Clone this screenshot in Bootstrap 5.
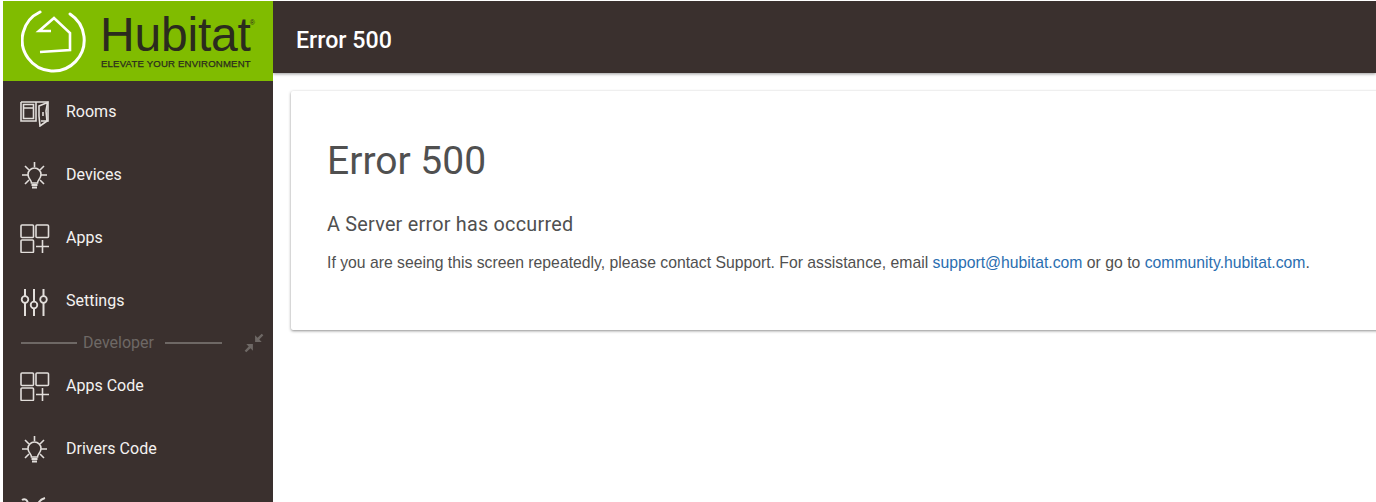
<!DOCTYPE html>
<html lang="en">
<head>
    <meta charset="UTF-8">
    <meta name="viewport" content="width=device-width, initial-scale=1.0">
    <title>Error 500</title>
    <link href="https://cdn.jsdelivr.net/npm/bootstrap@5.3.0/dist/css/bootstrap.min.css" rel="stylesheet">
    <style>
        html, body {
            height: 100%;
            overflow: hidden;
        }
        body {
            background: #fff;
            color: #505050;
            font-family: Roboto, "Liberation Sans", sans-serif;
        }
        .hub-shell {
            height: 100vh;
            padding-top: 1px;
        }
        .hub-side {
            width: 270px;
            margin-left: 3px;
            background: #3a302e;
            overflow: hidden;
        }
        .hub-logo {
            height: 80px;
            background: #80bc00;
            padding: 8px 0 0 18px;
            color: #2b2b1e;
        }
        .hub-logo-text {
            margin-left: 9px;
            padding-top: 4px;
        }
        .hub-word {
            font-family: "Liberation Sans", sans-serif;
            font-size: 48px;
            line-height: 44px;
            letter-spacing: -.2px;
            position: relative;
        }
        .hub-reg {
            font-size: 7px;
            line-height: 7px;
            letter-spacing: 0;
            position: absolute;
            top: 6px;
            right: -4px;
        }
        .hub-tag {
            font-family: "Liberation Sans", sans-serif;
            font-size: 9.6px;
            line-height: 10px;
            margin: 2px 0 0 1px;
            letter-spacing: .18px;
            white-space: nowrap;
            -webkit-text-stroke: .25px #2b2b1e;
        }
        .hub-menu {
            margin-top: -1px;
        }
        .hub-link {
            height: 63px;
            padding: 0 0 0 17px;
            color: #f4f2f1;
            font-size: 16px;
            gap: 16px;
        }
        .hub-link:hover, .hub-link:focus {
            color: #fff;
        }
        .hub-link svg {
            width: 30px;
            height: 30px;
            flex: none;
            fill: none;
            stroke: #e2dedb;
            stroke-width: 1.6;
        }
        .hub-divider {
            height: 22px;
            padding: 0 8px 0 18px;
            color: #6e6865;
            font-size: 16px;
        }
        .hub-divider i {
            height: 2px;
            background: #6e6865;
        }
        .hub-divider span {
            margin: 0 11px 0 6px;
        }
        .hub-top {
            height: 72px;
            background: #3a302e;
            color: #fff;
            padding: 6px 0 0 23px;
            font-size: 23.2px;
            font-weight: 500;
            box-shadow: 0 1px 3px rgba(0, 0, 0, .4);
        }
        .hub-panel {
            margin: 18px -10px 0 18px;
            height: 239px;
            padding: 47px 36px 0;
            border-radius: 2px;
            box-shadow: 0 1px 3px rgba(0, 0, 0, .45);
        }
        .hub-panel h1 {
            font-size: 39px;
            font-weight: 400;
            line-height: 46px;
            margin-bottom: 29px;
        }
        .hub-panel h5 {
            font-size: 19.8px;
            font-weight: 400;
            line-height: 24px;
            letter-spacing: .25px;
            margin-bottom: 15px;
        }
        .hub-panel p {
            font-family: "Liberation Sans", sans-serif;
            font-size: 15.75px;
            line-height: 22px;
            white-space: nowrap;
        }
        .hub-panel a {
            color: #2a6eb0;
            text-decoration: none;
        }
    </style>
</head>
<body>
    <div class="hub-shell d-flex">
        <!-- Sidebar -->
        <div class="hub-side flex-shrink-0">
            <div class="hub-logo d-flex">
                <svg width="70" height="66" viewBox="0 0 70 66" fill="none" stroke="#fff" class="flex-shrink-0">
                    <path d="M19 3A31 31 0 1 0 49 5" stroke-width="3" stroke-linecap="round"/>
                    <path d="M30 22H18L33 9 49 24V41L19 43" stroke-width="2.600"/>
                </svg>
                <div class="hub-logo-text">
                    <div class="hub-word">Hubitat<span class="hub-reg">®</span></div>
                    <div class="hub-tag">ELEVATE YOUR ENVIRONMENT</div>
                </div>
            </div>
            <nav class="nav flex-column flex-nowrap hub-menu">
                <a class="nav-link hub-link d-flex align-items-center" href="#">
                    <svg viewBox="0 0 30 30"><path d="M1 5H28V24H21M1 5V24H16V5M3.500 7.500H13.500V21.500H3.500ZM4 11H13"/><path d="M19 9L27.500 5.500 26 14 27 24 20 29 19 19Z"/><path d="M23 15V19"/></svg>
                    Rooms
                </a>
                <a class="nav-link hub-link d-flex align-items-center" href="#">
                    <svg viewBox="0 0 30 30"><use href="#hub-bulb"/></svg>
                    Devices
                </a>
                <a class="nav-link hub-link d-flex align-items-center" href="#">
                    <svg viewBox="0 0 30 30"><use href="#hub-apps"/></svg>
                    Apps
                </a>
                <a class="nav-link hub-link d-flex align-items-center" href="#">
                    <svg viewBox="0 0 30 30"><path d="M5 3V10M5 17V30M14 3V15.500M14 22.500V30M23.500 3V10M23.500 17V30" stroke-width="2"/><circle cx="5" cy="13.500" r="3.300" stroke-width="1.800"/><circle cx="14" cy="19" r="3.300" stroke-width="1.800"/><circle cx="23.500" cy="13.500" r="3.300" stroke-width="1.800"/></svg>
                    Settings
                </a>
                <div class="hub-divider d-flex align-items-center">
                    <i class="d-block" style="width:56px"></i>
                    <span>Developer</span>
                    <i class="d-block" style="width:57px"></i>
                    <svg class="ms-auto" width="22" height="22" viewBox="0 0 20 20" fill="#6e6865"><path d="M11 9V3L13.200 5.200 17 1.500 18.500 3 14.800 6.800 17 9Z"/><path d="M9 11V17L6.800 14.800 3 18.500 1.500 17 5.200 13.200 3 11Z"/></svg>
                </div>
                <a class="nav-link hub-link d-flex align-items-center" href="#">
                    <svg viewBox="0 0 30 30"><use href="#hub-apps"/></svg>
                    Apps Code
                </a>
                <a class="nav-link hub-link d-flex align-items-center" href="#">
                    <svg viewBox="0 0 30 30"><use href="#hub-bulb"/></svg>
                    Drivers Code
                </a>
                <a class="nav-link hub-link d-flex align-items-center" href="#" aria-label="More">
                    <svg viewBox="0 0 30 30"><path d="M2 3C5 1 7 3 8 6L14 14M25 1C21 2 18 6 17 9L9 20" stroke-width="2"/></svg>
                </a>
            </nav>
        </div>

        <!-- Main -->
        <div class="flex-grow-1 overflow-hidden">
            <div class="hub-top d-flex align-items-center">Error 500</div>
            <div class="hub-panel bg-white">
                <h1>Error 500</h1>
                <h5>A Server error has occurred</h5>
                <p>If you are seeing this screen repeatedly, please contact Support. For assistance, email <a href="#">support@hubitat.com</a> or go to <a href="#">community.hubitat.com</a>.</p>
            </div>
        </div>
    </div>

    <svg width="0" height="0" class="position-absolute">
        <defs>
            <g id="hub-bulb">
                <path d="M14.500 2V7M2 15H8M21 15H27M5 6L9 10M24 6L20 10M5 24L9 20M24 24L20 20"/>
                <path d="M11.500 23C11.500 20 8 18.500 8 14.500A6.500 6.500 0 0 1 21 14.500C21 18.500 17.500 20 17.500 23Z"/>
                <path d="M11.500 25H17.500M12 27.500H17" stroke-width="2"/>
            </g>
            <g id="hub-apps">
                <rect x="1" y="2" width="12.500" height="12.500" rx="1"/>
                <rect x="16" y="2" width="12.500" height="12.500" rx="1"/>
                <rect x="1" y="17" width="12.500" height="12.500" rx="1"/>
                <path d="M16 23.500H29M22.500 17V30"/>
            </g>
        </defs>
    </svg>

    <script src="https://cdn.jsdelivr.net/npm/bootstrap@5.3.0/dist/js/bootstrap.bundle.min.js"></script>
</body>
</html>
